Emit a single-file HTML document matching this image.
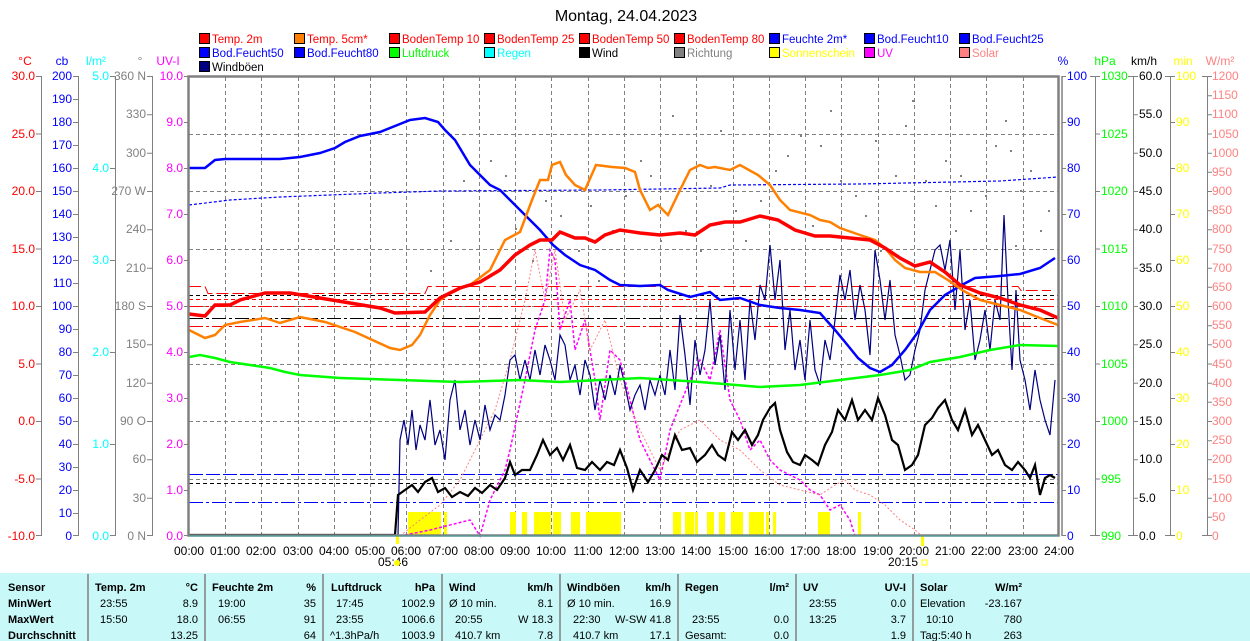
<!DOCTYPE html>
<html><head><meta charset="utf-8"><style>
html,body{margin:0;padding:0;background:#fff;}
svg{display:block;font-family:"Liberation Sans",sans-serif;}
</style></head><body>
<svg width="1250" height="641" viewBox="0 0 1250 641" xmlns="http://www.w3.org/2000/svg">
<rect width="1250" height="641" fill="#fff"/>
<text x="626" y="21" text-anchor="middle" font-size="16" fill="#000">Montag, 24.04.2023</text>
<!-- legend -->
<g font-size="11.5">
<g stroke="#000" stroke-width="1">
<rect x="199.5" y="33.5" width="10" height="10" fill="#f00"/><rect x="294.5" y="33.5" width="10" height="10" fill="#ff8000"/><rect x="389.5" y="33.5" width="10" height="10" fill="#f00"/><rect x="484.5" y="33.5" width="10" height="10" fill="#f00"/><rect x="579.5" y="33.5" width="10" height="10" fill="#f00"/><rect x="674.5" y="33.5" width="10" height="10" fill="#f00"/><rect x="769.5" y="33.5" width="10" height="10" fill="#00f"/><rect x="864.5" y="33.5" width="10" height="10" fill="#00f"/><rect x="959.5" y="33.5" width="10" height="10" fill="#00f"/>
<rect x="199.5" y="47.5" width="10" height="10" fill="#00f"/><rect x="294.5" y="47.5" width="10" height="10" fill="#00f"/><rect x="389.5" y="47.5" width="10" height="10" fill="#0f0"/><rect x="484.5" y="47.5" width="10" height="10" fill="#0ff"/><rect x="579.5" y="47.5" width="10" height="10" fill="#000"/><rect x="674.5" y="47.5" width="10" height="10" fill="#808080"/><rect x="769.5" y="47.5" width="10" height="10" fill="#ff0"/><rect x="864.5" y="47.5" width="10" height="10" fill="#f0f"/><rect x="959.5" y="47.5" width="10" height="10" fill="#ff8080"/>
<rect x="199.5" y="61.5" width="10" height="10" fill="#000080"/>
</g>
<text x="212" y="43" fill="#f00">Temp. 2m</text><text x="307" y="43" fill="#f00">Temp. 5cm*</text><text x="402" y="43" fill="#f00">BodenTemp 10</text><text x="497" y="43" fill="#f00">BodenTemp 25</text><text x="592" y="43" fill="#f00">BodenTemp 50</text><text x="687" y="43" fill="#f00">BodenTemp 80</text><text x="782" y="43" fill="#00f">Feuchte 2m*</text><text x="877" y="43" fill="#00f">Bod.Feucht10</text><text x="972" y="43" fill="#00f">Bod.Feucht25</text>
<text x="212" y="57" fill="#00f">Bod.Feucht50</text><text x="307" y="57" fill="#00f">Bod.Feucht80</text><text x="402" y="57" fill="#0f0">Luftdruck</text><text x="497" y="57" fill="#0ff">Regen</text><text x="592" y="57" fill="#000">Wind</text><text x="687" y="57" fill="#808080">Richtung</text><text x="782" y="57" fill="#ff0">Sonnenschein</text><text x="877" y="57" fill="#f0f">UV</text><text x="972" y="57" fill="#ff8080">Solar</text>
<text x="212" y="71" fill="#000">Windböen</text>
</g>
<!-- axis headers -->
<g font-size="12">
<text x="25" y="65" text-anchor="middle" fill="#f00">°C</text>
<text x="62" y="65" text-anchor="middle" fill="#00f">cb</text>
<text x="96" y="65" text-anchor="middle" fill="#0ff">l/m²</text>
<text x="140" y="65" text-anchor="middle" fill="#808080">°</text>
<text x="168" y="65" text-anchor="middle" fill="#f0f">UV-I</text>
<text x="1063" y="65" text-anchor="middle" fill="#00f">%</text>
<text x="1105" y="65" text-anchor="middle" fill="#0f0">hPa</text>
<text x="1144" y="65" text-anchor="middle" fill="#000">km/h</text>
<text x="1183" y="65" text-anchor="middle" fill="#ff0">min</text>
<text x="1220" y="65" text-anchor="middle" fill="#ff8080">W/m²</text>
</g>
<!-- axis lines -->
<g stroke="#808080" stroke-width="1">
<line x1="41.5" y1="76" x2="41.5" y2="536"/><line x1="78.5" y1="76" x2="78.5" y2="536"/><line x1="115.5" y1="76" x2="115.5" y2="536"/><line x1="152.5" y1="76" x2="152.5" y2="536"/>
<line x1="1095.5" y1="76" x2="1095.5" y2="536"/><line x1="1133.5" y1="76" x2="1133.5" y2="536"/><line x1="1170.5" y1="76" x2="1170.5" y2="536"/><line x1="1207.5" y1="76" x2="1207.5" y2="536"/>
</g>
<g font-size="12" fill="#f00" text-anchor="end">
<text x="35" y="80">30.0</text><text x="35" y="138">25.0</text><text x="35" y="195">20.0</text><text x="35" y="253">15.0</text><text x="35" y="310">10.0</text><text x="35" y="368">5.0</text><text x="35" y="425">0.0</text><text x="35" y="483">-5.0</text><text x="35" y="540">-10.0</text>
</g>
<path stroke="#808080" d="M36 76.5h5M36 134h5M36 191.5h5M36 249h5M36 306.5h5M36 364h5M36 421.5h5M36 479h5M36 535.5h5"/>
<g font-size="12" fill="#00f" text-anchor="end">
<text x="72" y="80">200</text><text x="72" y="103">190</text><text x="72" y="126">180</text><text x="72" y="149">170</text><text x="72" y="172">160</text><text x="72" y="195">150</text><text x="72" y="218">140</text><text x="72" y="241">130</text><text x="72" y="264">120</text><text x="72" y="287">110</text><text x="72" y="310">100</text><text x="72" y="333">90</text><text x="72" y="356">80</text><text x="72" y="379">70</text><text x="72" y="402">60</text><text x="72" y="425">50</text><text x="72" y="448">40</text><text x="72" y="471">30</text><text x="72" y="494">20</text><text x="72" y="517">10</text><text x="72" y="540">0</text>
</g>
<path stroke="#808080" d="M73 76.5h5M73 99.5h5M73 122.5h5M73 145.5h5M73 168.5h5M73 191.5h5M73 214.5h5M73 237.5h5M73 260.5h5M73 283.5h5M73 306.5h5M73 329.5h5M73 352.5h5M73 375.5h5M73 398.5h5M73 421.5h5M73 444.5h5M73 467.5h5M73 490.5h5M73 513.5h5M73 535.5h5"/>
<g font-size="12" fill="#0ff" text-anchor="end">
<text x="109" y="80">5.0</text><text x="109" y="172">4.0</text><text x="109" y="264">3.0</text><text x="109" y="356">2.0</text><text x="109" y="448">1.0</text><text x="109" y="540">0.0</text>
</g>
<path stroke="#808080" d="M110 76.5h5M110 168.5h5M110 260.5h5M110 352.5h5M110 444.5h5M110 535.5h5"/>
<g font-size="12" fill="#808080" text-anchor="end">
<text x="146" y="80">360 N</text><text x="146" y="118">330</text><text x="146" y="157">300</text><text x="146" y="195">270 W</text><text x="146" y="233">240</text><text x="146" y="272">210</text><text x="146" y="310">180 S</text><text x="146" y="348">150</text><text x="146" y="387">120</text><text x="146" y="425">90 O</text><text x="146" y="463">60</text><text x="146" y="502">30</text><text x="146" y="540">0 N</text>
</g>
<path stroke="#808080" d="M147 76.5h5M147 114.8h5M147 153.2h5M147 191.5h5M147 229.8h5M147 268.2h5M147 306.5h5M147 344.8h5M147 383.2h5M147 421.5h5M147 459.8h5M147 498.2h5M147 535.5h5"/>
<g font-size="12" fill="#f0f" text-anchor="end">
<text x="183" y="80">10.0</text><text x="183" y="126">9.0</text><text x="183" y="172">8.0</text><text x="183" y="218">7.0</text><text x="183" y="264">6.0</text><text x="183" y="310">5.0</text><text x="183" y="356">4.0</text><text x="183" y="402">3.0</text><text x="183" y="448">2.0</text><text x="183" y="494">1.0</text><text x="183" y="540">0.0</text>
</g>
<path stroke="#808080" d="M184 76.5h4M184 122.5h4M184 168.5h4M184 214.5h4M184 260.5h4M184 306.5h4M184 352.5h4M184 398.5h4M184 444.5h4M184 490.5h4M184 535.5h4"/>
<g font-size="12" fill="#00f">
<text x="1067" y="80">100</text><text x="1067" y="126">90</text><text x="1067" y="172">80</text><text x="1067" y="218">70</text><text x="1067" y="264">60</text><text x="1067" y="310">50</text><text x="1067" y="356">40</text><text x="1067" y="402">30</text><text x="1067" y="448">20</text><text x="1067" y="494">10</text><text x="1067" y="540">0</text>
</g>
<path stroke="#808080" d="M1062 76.5h4M1062 122.5h4M1062 168.5h4M1062 214.5h4M1062 260.5h4M1062 306.5h4M1062 352.5h4M1062 398.5h4M1062 444.5h4M1062 490.5h4M1062 535.5h4"/>
<g font-size="12" fill="#0f0">
<text x="1101" y="80">1030</text><text x="1101" y="138">1025</text><text x="1101" y="195">1020</text><text x="1101" y="253">1015</text><text x="1101" y="310">1010</text><text x="1101" y="368">1005</text><text x="1101" y="425">1000</text><text x="1101" y="483">995</text><text x="1101" y="540">990</text>
</g>
<path stroke="#808080" d="M1090 76.5h10M1095 134h5M1095 191.5h5M1095 249h5M1095 306.5h5M1095 364h5M1095 421.5h5M1095 479h5M1090 535.5h10"/>
<g font-size="12" fill="#000">
<text x="1139" y="80">60.0</text><text x="1139" y="118">55.0</text><text x="1139" y="157">50.0</text><text x="1139" y="195">45.0</text><text x="1139" y="233">40.0</text><text x="1139" y="272">35.0</text><text x="1139" y="310">30.0</text><text x="1139" y="348">25.0</text><text x="1139" y="387">20.0</text><text x="1139" y="425">15.0</text><text x="1139" y="463">10.0</text><text x="1139" y="502">5.0</text><text x="1139" y="540">0.0</text>
</g>
<path stroke="#808080" d="M1128 76.5h10M1133 114.8h5M1133 153.2h5M1133 191.5h5M1133 229.8h5M1133 268.2h5M1133 306.5h5M1133 344.8h5M1133 383.2h5M1133 421.5h5M1133 459.8h5M1133 498.2h5M1128 535.5h10"/>
<g font-size="12" fill="#ff0">
<text x="1176" y="80">100</text><text x="1176" y="126">90</text><text x="1176" y="172">80</text><text x="1176" y="218">70</text><text x="1176" y="264">60</text><text x="1176" y="310">50</text><text x="1176" y="356">40</text><text x="1176" y="402">30</text><text x="1176" y="448">20</text><text x="1176" y="494">10</text><text x="1176" y="540">0</text>
</g>
<path stroke="#808080" d="M1165 76.5h10M1170 122.5h5M1170 168.5h5M1170 214.5h5M1170 260.5h5M1170 306.5h5M1170 352.5h5M1170 398.5h5M1170 444.5h5M1170 490.5h5M1165 535.5h10"/>
<g font-size="12" fill="#ff8080">
<text x="1212" y="80">1200</text><text x="1212" y="99">1150</text><text x="1212" y="118">1100</text><text x="1212" y="138">1050</text><text x="1212" y="157">1000</text><text x="1212" y="176">950</text><text x="1212" y="195">900</text><text x="1212" y="214">850</text><text x="1212" y="233">800</text><text x="1212" y="253">750</text><text x="1212" y="272">700</text><text x="1212" y="291">650</text><text x="1212" y="310">600</text><text x="1212" y="329">550</text><text x="1212" y="348">500</text><text x="1212" y="368">450</text><text x="1212" y="387">400</text><text x="1212" y="406">350</text><text x="1212" y="425">300</text><text x="1212" y="444">250</text><text x="1212" y="463">200</text><text x="1212" y="483">150</text><text x="1212" y="502">100</text><text x="1212" y="521">50</text><text x="1212" y="540">0</text>
</g>
<path stroke="#808080" d="M1202 76.5h10M1207 95.7h5M1207 114.8h5M1207 134h5M1207 153.2h5M1207 172.3h5M1207 191.5h5M1207 210.7h5M1207 229.8h5M1207 249h5M1207 268.2h5M1207 287.3h5M1207 306.5h5M1207 325.7h5M1207 344.8h5M1207 364h5M1207 383.2h5M1207 402.3h5M1207 421.5h5M1207 440.7h5M1207 459.8h5M1207 479h5M1207 498.2h5M1207 517.3h5M1202 535.5h10"/>

<g stroke="#808080" stroke-width="1" stroke-dasharray="4,3">
<path d="M225.5 77V536M261.5 77V536M298.5 77V536M334.5 77V536M370.5 77V536M406.5 77V536M443.5 77V536M479.5 77V536M515.5 77V536M551.5 77V536M588.5 77V536M624.5 77V536M660.5 77V536M696.5 77V536M733.5 77V536M769.5 77V536M805.5 77V536M841.5 77V536M878.5 77V536M914.5 77V536M950.5 77V536M986.5 77V536M1023.5 77V536"/>
<path d="M189 134.5H1058M189 191.5H1058M189 249.5H1058M189 306.5H1058M189 364.5H1058M189 421.5H1058M189 479.5H1058"/>
</g>
<g fill="#ff0">
<rect x="408" y="512" width="33" height="24"/><rect x="444" y="512" width="3" height="24"/><rect x="510" y="512" width="6" height="24"/><rect x="522" y="512" width="5" height="24"/><rect x="534" y="512" width="17" height="24"/><rect x="553" y="512" width="8" height="24"/><rect x="571" y="512" width="9" height="24"/><rect x="586" y="512" width="35" height="24"/>
<rect x="673" y="512" width="8" height="24"/><rect x="685" y="512" width="9" height="24"/><rect x="695" y="512" width="3" height="24"/><rect x="707" y="512" width="7" height="24"/><rect x="719" y="512" width="6" height="24"/><rect x="731" y="512" width="12" height="24"/><rect x="749" y="512" width="15" height="24"/><rect x="766" y="512" width="3" height="24"/><rect x="773" y="512" width="3" height="24"/><rect x="818" y="512" width="12" height="24"/><rect x="858" y="512" width="3" height="24"/>
<rect x="396" y="536" width="3" height="8"/><rect x="921" y="536" width="3" height="10"/>
</g>
<g fill="#808080">
<rect x="463" y="180" width="2" height="2"/><rect x="478" y="190" width="2" height="2"/><rect x="505" y="175" width="2" height="2"/><rect x="515" y="228" width="2" height="2"/><rect x="545" y="200" width="2" height="2"/><rect x="578" y="250" width="2" height="2"/><rect x="612" y="230" width="2" height="2"/><rect x="640" y="160" width="2" height="2"/><rect x="672" y="115" width="2" height="2"/><rect x="700" y="250" width="2" height="2"/><rect x="720" y="130" width="2" height="2"/><rect x="760" y="200" width="2" height="2"/><rect x="787" y="155" width="2" height="2"/><rect x="800" y="135" width="2" height="2"/><rect x="830" y="110" width="2" height="2"/><rect x="855" y="195" width="2" height="2"/><rect x="875" y="140" width="2" height="2"/><rect x="905" y="125" width="2" height="2"/><rect x="925" y="180" width="2" height="2"/><rect x="945" y="160" width="2" height="2"/><rect x="970" y="210" width="2" height="2"/><rect x="995" y="145" width="2" height="2"/><rect x="1010" y="150" width="2" height="2"/><rect x="1020" y="190" width="2" height="2"/><rect x="1040" y="230" width="2" height="2"/><rect x="430" y="270" width="2" height="2"/><rect x="450" y="240" width="2" height="2"/><rect x="880" y="250" width="2" height="2"/><rect x="735" y="210" width="2" height="2"/><rect x="660" y="240" width="2" height="2"/>
<rect x="490" y="160" width="2" height="2"/><rect x="525" y="190" width="2" height="2"/><rect x="532" y="260" width="2" height="2"/><rect x="560" y="215" width="2" height="2"/><rect x="590" y="205" width="2" height="2"/><rect x="598" y="280" width="2" height="2"/><rect x="625" y="195" width="2" height="2"/><rect x="650" y="175" width="2" height="2"/><rect x="685" y="230" width="2" height="2"/><rect x="710" y="185" width="2" height="2"/><rect x="745" y="240" width="2" height="2"/><rect x="775" y="170" width="2" height="2"/><rect x="812" y="225" width="2" height="2"/><rect x="820" y="145" width="2" height="2"/><rect x="840" y="180" width="2" height="2"/><rect x="865" y="215" width="2" height="2"/><rect x="895" y="175" width="2" height="2"/><rect x="912" y="100" width="2" height="2"/><rect x="935" y="205" width="2" height="2"/><rect x="955" y="230" width="2" height="2"/><rect x="985" y="195" width="2" height="2"/><rect x="1005" y="120" width="2" height="2"/><rect x="1030" y="170" width="2" height="2"/><rect x="1048" y="210" width="2" height="2"/><rect x="1015" y="245" width="2" height="2"/><rect x="960" y="175" width="2" height="2"/>
</g>
<g fill="none" stroke-width="1">
<path d="M189 286.5h16l3 7h217l3-7h590l3 4h30" stroke="#f00" stroke-dasharray="12,4"/>
<path d="M189 299.5H1058" stroke="#f00" stroke-dasharray="4,3"/>
<path d="M189 306.5H1058" stroke="#f00" stroke-dasharray="14,3,3,3"/>
<path d="M189 326.5H1058" stroke="#f00" stroke-dasharray="14,3,3,3"/>
<path d="M189 295.5H1058" stroke="#000" stroke-dasharray="4,3"/>
<path d="M189 318.5H1058" stroke="#000" stroke-dasharray="14,3,3,3"/>
<path d="M189 474.5H1058" stroke="#00f" stroke-dasharray="14,3"/>
<path d="M189 483.5H1058" stroke="#000" stroke-dasharray="4,3"/>
<path d="M189 502.5H1058" stroke="#00f" stroke-dasharray="14,3,3,3"/>
</g>
<polyline fill="none" stroke="#f0f" stroke-width="1.5" stroke-dasharray="3,2" points="400,536 430,530 470,520 480,536 490,500 505,470 510,450 525,380 535,330 545,300 550,250 555,260 560,330 570,300 575,350 585,320 595,380 600,420 610,350 620,360 630,400 640,440 650,460 660,480 670,430 690,380 700,360 710,380 720,330 730,400 740,420 750,450 760,440 770,460 780,470 790,475 800,480 810,490 820,495 830,510 840,505 850,520 855,536"/>
<polyline fill="none" stroke="#ff8080" stroke-width="1" stroke-dasharray="2,2" points="400,536 420,520 440,505 460,480 480,440 495,410 510,360 525,300 535,250 545,300 555,250 565,320 580,290 590,350 605,320 620,380 640,430 660,470 680,430 700,420 720,440 740,450 760,470 780,485 800,490 820,495 835,485 845,480 855,490 870,495 885,505 900,520 915,530 922,536"/>
<polyline fill="none" stroke="#000080" stroke-width="1.2" points="398,536 400,440 404,420 408,445 412,410 416,450 420,425 425,440 430,400 435,445 440,430 445,460 450,400 455,380 460,430 465,410 470,445 475,420 480,440 485,405 490,430 495,415 500,420 505,395 510,360 515,355 520,380 525,360 530,380 535,350 540,375 545,345 550,360 555,380 560,335 565,345 570,380 575,365 580,395 585,360 590,375 595,410 600,380 605,400 610,375 615,395 620,365 625,385 630,410 635,395 640,385 645,410 650,380 655,395 660,375 665,395 670,350 675,390 680,315 685,355 690,405 695,340 700,375 705,350 710,300 715,365 720,335 725,390 730,310 735,370 740,320 745,380 750,300 755,340 760,285 765,300 770,245 775,300 780,260 785,350 790,310 795,370 800,340 805,380 810,320 815,370 820,385 825,340 830,360 835,320 840,275 845,300 850,270 855,320 860,285 865,310 870,355 875,250 880,280 885,320 890,280 895,335 900,355 905,380 910,375 915,350 920,330 925,290 930,270 935,250 940,245 945,270 950,240 955,310 960,250 965,330 970,300 975,360 980,340 985,310 990,350 995,300 1000,320 1004,215 1008,300 1012,370 1016,290 1020,360 1025,380 1030,410 1035,370 1040,400 1045,420 1050,435 1055,380"/>
<polyline fill="none" stroke="#0f0" stroke-width="2.5" points="189,357 200,355 215,358 230,362 250,365 270,368 285,372 300,375 340,378 400,380 460,382 520,380 560,382 600,380 640,378 700,382 760,387 800,385 840,380 880,375 910,370 930,362 960,357 990,350 1020,345 1058,346"/>
<polyline fill="none" stroke="#00f" stroke-width="1.2" stroke-dasharray="3,2" points="189,205 230,200 280,197 330,195 380,193 440,191 600,190 720,188 730,185 860,184 1000,181 1058,177"/>
<polyline fill="none" stroke="#00f" stroke-width="2.5" points="189,168 205,168 215,160 225,159 280,159 300,157 320,153 335,148 345,142 360,136 380,132 395,126 410,120 425,118 438,122 445,130 455,140 470,165 480,175 490,185 500,190 510,200 520,210 530,220 540,230 553,245 565,255 580,265 595,270 610,280 620,285 640,286 660,285 668,290 690,297 710,292 720,300 740,298 760,305 780,308 800,310 820,313 835,330 845,342 858,358 870,368 880,372 892,365 905,350 918,332 930,310 945,295 960,286 975,278 1000,276 1020,274 1040,268 1055,258"/>
<polyline fill="none" stroke="#ff8000" stroke-width="2.5" points="189,330 205,338 215,335 225,325 240,322 265,318 280,323 300,317 325,322 355,332 390,348 400,350 412,345 420,335 430,315 440,300 455,290 470,285 490,270 505,240 520,232 532,200 540,180 548,180 552,165 560,162 566,175 575,185 585,190 596,165 612,167 625,168 635,172 640,190 650,210 658,205 668,215 680,190 690,170 700,165 708,168 715,167 730,170 740,165 758,175 770,185 780,200 790,210 810,215 820,220 830,222 840,228 860,235 875,240 885,248 895,260 905,268 920,272 935,272 948,280 962,290 980,300 1000,305 1020,310 1040,318 1058,325"/>
<polyline fill="none" stroke="#f00" stroke-width="3.5" points="189,314 205,316 215,305 230,305 240,300 265,293 290,293 320,298 350,303 380,308 395,313 425,312 440,298 460,288 480,282 500,270 515,255 530,245 540,240 552,240 560,232 575,238 585,238 595,242 605,235 620,230 640,233 660,235 680,233 695,235 710,225 725,222 740,222 760,216 778,220 795,230 815,236 830,236 850,238 870,240 885,248 900,258 915,266 930,262 945,272 960,285 980,293 1000,298 1020,305 1040,310 1058,318"/>
<polyline fill="none" stroke="#000" stroke-width="2.2" points="189,535 395,535 398,495 405,490 412,485 418,492 425,482 432,478 438,492 445,488 452,497 460,492 468,496 475,488 482,493 490,485 497,490 505,478 510,462 515,475 522,470 530,470 537,455 543,440 550,455 557,448 563,460 570,445 577,468 585,470 592,462 600,470 607,462 614,465 620,450 627,468 633,490 640,470 648,482 655,470 662,455 668,460 675,435 682,450 690,448 697,462 705,455 712,445 718,455 725,460 732,432 738,440 745,430 752,445 758,435 763,420 770,408 775,403 780,430 787,452 793,462 800,465 805,455 812,460 818,465 825,445 832,432 838,410 845,420 852,400 858,420 865,410 872,420 878,398 885,415 892,440 898,445 905,470 912,465 918,455 925,425 932,418 938,408 945,400 952,420 958,430 965,410 972,435 978,425 985,440 992,455 998,450 1005,465 1012,470 1018,462 1025,470 1030,478 1035,465 1040,495 1045,478 1050,475 1055,478"/>
<rect x="188.5" y="76.5" width="870" height="459" fill="none" stroke="#808080" stroke-width="2.5"/>
<line x1="1062" y1="76" x2="1062" y2="536" stroke="#808080" stroke-width="1.5"/>
<line x1="189" y1="536" x2="1058" y2="536" stroke="#40a0a0" stroke-width="1"/>
<g font-size="12" fill="#000" text-anchor="middle">
<text x="189" y="555">00:00</text><text x="225" y="555">01:00</text><text x="261" y="555">02:00</text><text x="298" y="555">03:00</text><text x="334" y="555">04:00</text><text x="370" y="555">05:00</text><text x="406" y="555">06:00</text><text x="443" y="555">07:00</text><text x="479" y="555">08:00</text><text x="515" y="555">09:00</text><text x="551" y="555">10:00</text><text x="588" y="555">11:00</text><text x="624" y="555">12:00</text><text x="660" y="555">13:00</text><text x="696" y="555">14:00</text><text x="733" y="555">15:00</text><text x="769" y="555">16:00</text><text x="805" y="555">17:00</text><text x="841" y="555">18:00</text><text x="878" y="555">19:00</text><text x="914" y="555">20:00</text><text x="950" y="555">21:00</text><text x="986" y="555">22:00</text><text x="1023" y="555">23:00</text><text x="1059" y="555">24:00</text>
<text x="378" y="566" text-anchor="start">05:46</text><text x="888" y="566" text-anchor="start">20:15</text>
</g>
<circle cx="397" cy="563" r="3" fill="#ff0"/>
<rect x="922" y="560" width="5" height="5" fill="none" stroke="#ff0"/>
<rect x="0" y="573" width="1250" height="68" fill="#c8f8f8"/>
<g stroke="#808080" stroke-width="1.5">
<line x1="88" y1="574" x2="88" y2="641"/><line x1="205" y1="574" x2="205" y2="641"/><line x1="323" y1="574" x2="323" y2="641"/><line x1="442" y1="574" x2="442" y2="641"/><line x1="560" y1="574" x2="560" y2="641"/><line x1="678" y1="574" x2="678" y2="641"/><line x1="796" y1="574" x2="796" y2="641"/><line x1="913" y1="574" x2="913" y2="641"/>
</g>
<g font-size="11" fill="#000">
<g font-weight="bold">
<text x="8" y="591">Sensor</text><text x="8" y="607">MinWert</text><text x="8" y="623">MaxWert</text><text x="8" y="639">Durchschnitt</text>
<text x="95" y="591">Temp. 2m</text><text x="198" y="591" text-anchor="end">°C</text>
<text x="212" y="591">Feuchte 2m</text><text x="316" y="591" text-anchor="end">%</text>
<text x="331" y="591">Luftdruck</text><text x="435" y="591" text-anchor="end">hPa</text>
<text x="449" y="591">Wind</text><text x="553" y="591" text-anchor="end">km/h</text>
<text x="567" y="591">Windböen</text><text x="671" y="591" text-anchor="end">km/h</text>
<text x="685" y="591">Regen</text><text x="789" y="591" text-anchor="end">l/m²</text>
<text x="803" y="591">UV</text><text x="906" y="591" text-anchor="end">UV-I</text>
<text x="920" y="591">Solar</text><text x="1022" y="591" text-anchor="end">W/m²</text>
</g>
<text x="100" y="607">23:55</text><text x="198" y="607" text-anchor="end">8.9</text>
<text x="100" y="623">15:50</text><text x="198" y="623" text-anchor="end">18.0</text>
<text x="198" y="639" text-anchor="end">13.25</text>
<text x="218" y="607">19:00</text><text x="316" y="607" text-anchor="end">35</text>
<text x="218" y="623">06:55</text><text x="316" y="623" text-anchor="end">91</text>
<text x="316" y="639" text-anchor="end">64</text>
<text x="336" y="607">17:45</text><text x="435" y="607" text-anchor="end">1002.9</text>
<text x="336" y="623">23:55</text><text x="435" y="623" text-anchor="end">1006.6</text>
<text x="330" y="639">^1.3hPa/h</text><text x="435" y="639" text-anchor="end">1003.9</text>
<text x="449" y="607">Ø 10 min.</text><text x="553" y="607" text-anchor="end">8.1</text>
<text x="455" y="623">20:55</text><text x="553" y="623" text-anchor="end">W 18.3</text>
<text x="455" y="639">410.7 km</text><text x="553" y="639" text-anchor="end">7.8</text>
<text x="567" y="607">Ø 10 min.</text><text x="671" y="607" text-anchor="end">16.9</text>
<text x="573" y="623">22:30</text><text x="671" y="623" text-anchor="end">W-SW 41.8</text>
<text x="573" y="639">410.7 km</text><text x="671" y="639" text-anchor="end">17.1</text>
<text x="692" y="623">23:55</text><text x="789" y="623" text-anchor="end">0.0</text>
<text x="685" y="639">Gesamt:</text><text x="789" y="639" text-anchor="end">0.0</text>
<text x="809" y="607">23:55</text><text x="906" y="607" text-anchor="end">0.0</text>
<text x="809" y="623">13:25</text><text x="906" y="623" text-anchor="end">3.7</text>
<text x="906" y="639" text-anchor="end">1.9</text>
<text x="920" y="607">Elevation</text><text x="1022" y="607" text-anchor="end">-23.167</text>
<text x="926" y="623">10:10</text><text x="1022" y="623" text-anchor="end">780</text>
<text x="920" y="639">Tag:5:40 h</text><text x="1022" y="639" text-anchor="end">263</text>
</g>
</svg>
</body></html>
